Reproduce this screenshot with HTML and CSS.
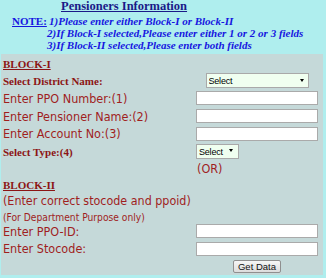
FILE: index.html
```html
<!DOCTYPE html>
<html lang="en">
<head>
<meta charset="utf-8">
<title>Pensioners Information</title>
<link rel="stylesheet" href="styles.css">
</head>
<body>
<div class="page">
  <h1 class="title">Pensioners Information</h1>
  <div class="note">
    <span class="note-label">NOTE:</span>
    <div class="note-lines">
      <p class="note-line first">1)Please enter either Block-I or Block-II</p>
      <p class="note-line">2)If Block-I selected,Please enter either 1 or 2 or 3 fields</p>
      <p class="note-line">3)If Block-II selected,Please enter both fields</p>
    </div>
  </div>
  <form class="panel">
    <div class="block-head">BLOCK-I</div>

    <label class="lbl-b">Select District Name:</label>
    <span class="select-wrap district"><select class="sel"><option>Select</option></select></span>

    <label class="lbl">Enter PPO Number:(1)</label>
    <input class="field" type="text">

    <label class="lbl">Enter Pensioner Name:(2)</label>
    <input class="field" type="text">

    <label class="lbl">Enter Account No:(3)</label>
    <input class="field" type="text">

    <label class="lbl-b">Select Type:(4)</label>
    <span class="select-wrap type"><select class="sel"><option>Select</option></select></span>

    <div class="or">(OR)</div>

    <div class="block-head">BLOCK-II</div>
    <div class="hint">(Enter correct stocode and ppoid)</div>
    <div class="hint-small">(For Department Purpose only)</div>

    <label class="lbl">Enter PPO-ID:</label>
    <input class="field" type="text">

    <label class="lbl">Enter Stocode:</label>
    <input class="field" type="text">

    <button class="btn" type="button">Get Data</button>
  </form>
</div>
</body>
</html>
```

FILE: styles.css
```css
html, body {
  margin: 0;
  padding: 0;
}
body {
  background: #afeeee;
  font-family: "Liberation Serif", "Times New Roman", serif;
  width: 326px;
  height: 278px;
  overflow: hidden;
}

.title {
  margin: 0;
  height: 13px;
  line-height: 13px;
  padding-left: 61px;
  font-size: 12.5px;
  font-weight: bold;
  color: #1a1a88;
  text-decoration: underline;
}

.note {
  display: flex;
  margin-top: 2px;
  height: 39px;
  font-size: 11px;
  line-height: 12.2px;
  font-weight: bold;
  color: #1616e0;
}
.note-label {
  margin-left: 12px;
  width: 35px;
  text-decoration: underline;
}
.note-line {
  margin: 0;
  font-style: italic;
  white-space: nowrap;
}
.note-line.first {
  text-indent: 2px;
}

.panel {
  margin: 0 0 0 1px;
  width: 322px;
  height: 221px;
  box-sizing: border-box;
  padding: 1px 0 0 2px;
  background: #c5d9d9;
  display: grid;
  grid-template-columns: 193px 122px;
  grid-template-rows: 17px 17px 18px 18px 17px 19px 15px 17px 15px 15px 16px 19px 17px;
  align-items: center;
}

.block-head {
  grid-column: 1 / -1;
  font-size: 11px;
  font-weight: bold;
  color: #8c1515;
  text-decoration: underline;
}
.lbl-b {
  font-size: 11px;
  font-weight: bold;
  color: #8c1515;
}
.lbl, .or, .hint, .hint-small {
  font-family: "DejaVu Sans Condensed", "DejaVu Sans", Verdana, sans-serif;
  color: #a01e1e;
  white-space: nowrap;
}
.lbl { font-size: 12.5px; }
.or {
  grid-column: 2;
  font-size: 12.5px;
  padding-left: 1px;
}
.hint {
  grid-column: 1 / -1;
  font-size: 12.4px;
}
.hint-small {
  grid-column: 1 / -1;
  font-size: 10.2px;
  align-self: end;
}

.field {
  width: 122px;
  height: 14px;
  box-sizing: border-box;
  margin: 0;
  padding: 0 2px;
  border: 1px solid #aaaaaa;
  background: #fff;
}

.select-wrap {
  position: relative;
  display: block;
  height: 15px;
}
.select-wrap.district {
  width: 103px;
  justify-self: center;
}
.select-wrap.type {
  width: 43px;
  justify-self: start;
}
.sel {
  appearance: none;
  -webkit-appearance: none;
  display: block;
  width: 100%;
  height: 15px;
  box-sizing: border-box;
  margin: 0;
  padding: 0 0 0 2px;
  border: 1px solid #a9a9a9;
  border-radius: 0;
  background: #f0fff0;
  font-family: "Liberation Sans", Arial, sans-serif;
  font-size: 9px;
  letter-spacing: -0.2px;
  color: #000;
}
.select-wrap::after {
  content: "";
  position: absolute;
  top: 6px;
  right: 5px;
  border-left: 2px solid transparent;
  border-right: 2px solid transparent;
  border-top: 3px solid #000;
}
.select-wrap.type::after {
  right: 6px;
  top: 5px;
}

.btn {
  grid-column: 2;
  justify-self: center;
  width: 48px;
  height: 13px;
  box-sizing: border-box;
  margin: 0;
  padding: 0;
  border: 1px solid #8f8f8f;
  border-radius: 2px;
  background: linear-gradient(#f6f6f6, #dcdcdc);
  font-family: "Liberation Sans", Arial, sans-serif;
  font-size: 9.5px;
  line-height: 11px;
  color: #111;
}
```
